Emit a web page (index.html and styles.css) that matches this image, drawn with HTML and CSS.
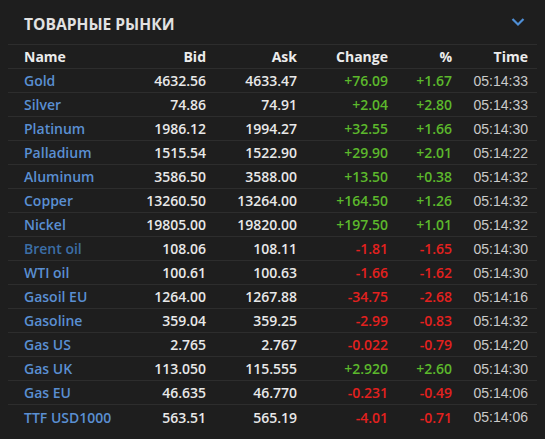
FILE: index.html
```html
<!DOCTYPE html>
<html lang="ru">
<head>
  <meta charset="UTF-8">
  <title>Товарные рынки</title>
  <link rel="stylesheet" href="styles.css">
</head>
<body>
  <div class="panel">
    <div class="panel-head">
      <h2>ТОВАРНЫЕ РЫНКИ</h2>
      <svg class="chevron" width="14" height="10" viewBox="0 0 14 10">
        <path d="M1.5 2 L7 7.5 L12.5 2" fill="none" stroke="#4f8fd6" stroke-width="2.2"/>
      </svg>
    </div>

    <div class="row head">
      <span class="name">Name</span>
      <span>Bid</span>
      <span>Ask</span>
      <span>Change</span>
      <span>%</span>
      <span>Time</span>
    </div>

    <div id="rows"></div>
  </div>

  <script>
    var data = [
      ['Gold', '4632.56', '4633.47', '+76.09', '+1.67', '05:14:33'],
      ['Silver', '74.86', '74.91', '+2.04', '+2.80', '05:14:33'],
      ['Platinum', '1986.12', '1994.27', '+32.55', '+1.66', '05:14:30'],
      ['Palladium', '1515.54', '1522.90', '+29.90', '+2.01', '05:14:22'],
      ['Aluminum', '3586.50', '3588.00', '+13.50', '+0.38', '05:14:32'],
      ['Copper', '13260.50', '13264.00', '+164.50', '+1.26', '05:14:32'],
      ['Nickel', '19805.00', '19820.00', '+197.50', '+1.01', '05:14:32'],
      ['Brent oil', '108.06', '108.11', '-1.81', '-1.65', '05:14:30', 'visited'],
      ['WTI oil', '100.61', '100.63', '-1.66', '-1.62', '05:14:30'],
      ['Gasoil EU', '1264.00', '1267.88', '-34.75', '-2.68', '05:14:16'],
      ['Gasoline', '359.04', '359.25', '-2.99', '-0.83', '05:14:32'],
      ['Gas US', '2.765', '2.767', '-0.022', '-0.79', '05:14:20'],
      ['Gas UK', '113.050', '115.555', '+2.920', '+2.60', '05:14:30'],
      ['Gas EU', '46.635', '46.770', '-0.231', '-0.49', '05:14:06'],
      ['TTF USD1000', '563.51', '565.19', '-4.01', '-0.71', '05:14:06']
    ];

    var html = '';
    data.forEach(function (r) {
      var dir = r[3].charAt(0) === '+' ? 'up' : 'down';
      html += '<div class="row">' +
        '<a class="name ' + (r[6] || '') + '" href="#">' + r[0] + '</a>' +
        '<span class="num">' + r[1] + '</span>' +
        '<span class="num">' + r[2] + '</span>' +
        '<span class="num ' + dir + '">' + r[3] + '</span>' +
        '<span class="num ' + dir + '">' + r[4] + '</span>' +
        '<span class="time">' + r[5] + '</span>' +
        '</div>';
    });
    document.getElementById('rows').innerHTML = html;
  </script>
</body>
</html>
```

FILE: styles.css
```css
body {
  background-color: #1e1e1e;
  color: #e6e6e6;
  font-family: "Open Sans", "Noto Sans", sans-serif;
  margin: 0;
  padding: 0;
}

.panel {
  margin: 0 8px;
}

.panel-head {
  display: flex;
  align-items: center;
  justify-content: space-between;
  height: 45px;
  padding: 3px 12px 0 16px;
  border-bottom: 1px solid #2d2d2d;
  box-sizing: border-box;
}

.panel-head h2 {
  margin: 0;
  font-size: 15.6px;
  font-weight: 700;
  color: #e2e2e2;
}

.chevron {
  display: block;
  margin-top: -3px;
}

.row {
  display: grid;
  grid-template-columns: 100px 82px 91px 91px 64px 76px;
  align-items: center;
  height: 24px;
  box-sizing: border-box;
  padding: 0 9px 0 16px;
  border-bottom: 1px solid #2d2d2d;
  font-size: 14px;
  font-weight: 600;
  text-align: right;
}

.row:last-child {
  border-bottom: none;
}

.head {
  color: #ececec;
  font-weight: 700;
}

.name {
  text-align: left;
  white-space: nowrap;
}

a.name {
  color: #5a8fd2;
  text-decoration: none;
}

a.visited {
  color: #3c6ea6;
}

.num {
  color: #e8e8e8;
}

.up {
  color: #5cb82c;
}

.down {
  color: #e3211f;
}

.time {
  font-family: "Liberation Sans", Arial, sans-serif;
  font-weight: 400;
  font-size: 14px;
  color: #cacaca;
}
```
